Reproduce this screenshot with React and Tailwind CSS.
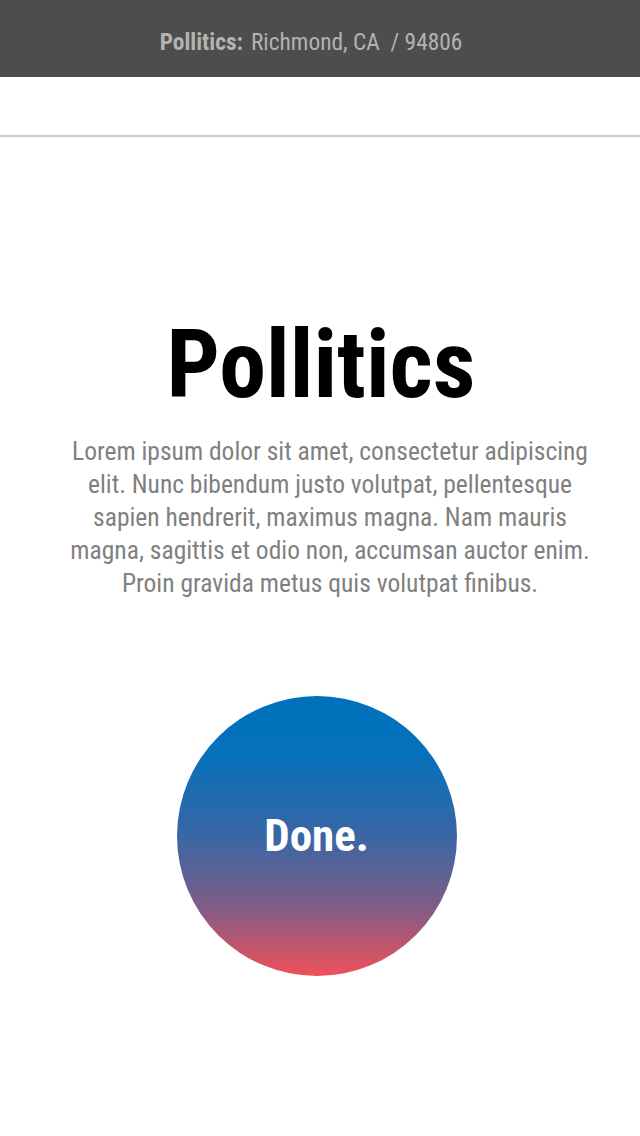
export default function App() {
  return (
    <div className="min-h-[1136px] bg-white font-['Roboto_Condensed','Liberation_Sans_Narrow',Roboto,sans-serif]">
      <header className="h-[77px] bg-[#4d4d4d] flex items-center justify-center pr-[18px] pt-[9px] text-[23.4px] text-[#b3b3b3]">
        <span className="font-bold">Pollitics:</span>
        <span className="ml-[8px]">Richmond, CA&nbsp; / 94806</span>
      </header>
      <div className="h-[60px] border-b-2 border-[#cccccc]" />

      <main className="flex flex-col items-center">
        <h1 className="mt-[180px] ml-[2px] text-[94px] leading-[96px] font-bold text-black">Pollitics</h1>
        <p className="mt-[22px] w-[530px] ml-[20px] text-center text-[25.5px] leading-[33px] text-[#808080]">
          Lorem ipsum dolor sit amet, consectetur adipiscing elit. Nunc bibendum justo volutpat, pellentesque sapien hendrerit, maximus magna. Nam mauris magna, sagittis et odio non, accumsan auctor enim. Proin gravida metus quis volutpat finibus.
        </p>
        <button className="mt-[96px] mr-[7px] w-[280px] h-[280px] rounded-full bg-[linear-gradient(to_bottom,#0071bc_0%,#0471bb_20%,#3966a5_50%,#7e5d87_75%,#ef5059_100%)] flex items-center justify-center text-white text-[45px] font-bold">
          Done.
        </button>
      </main>
    </div>
  );
}
